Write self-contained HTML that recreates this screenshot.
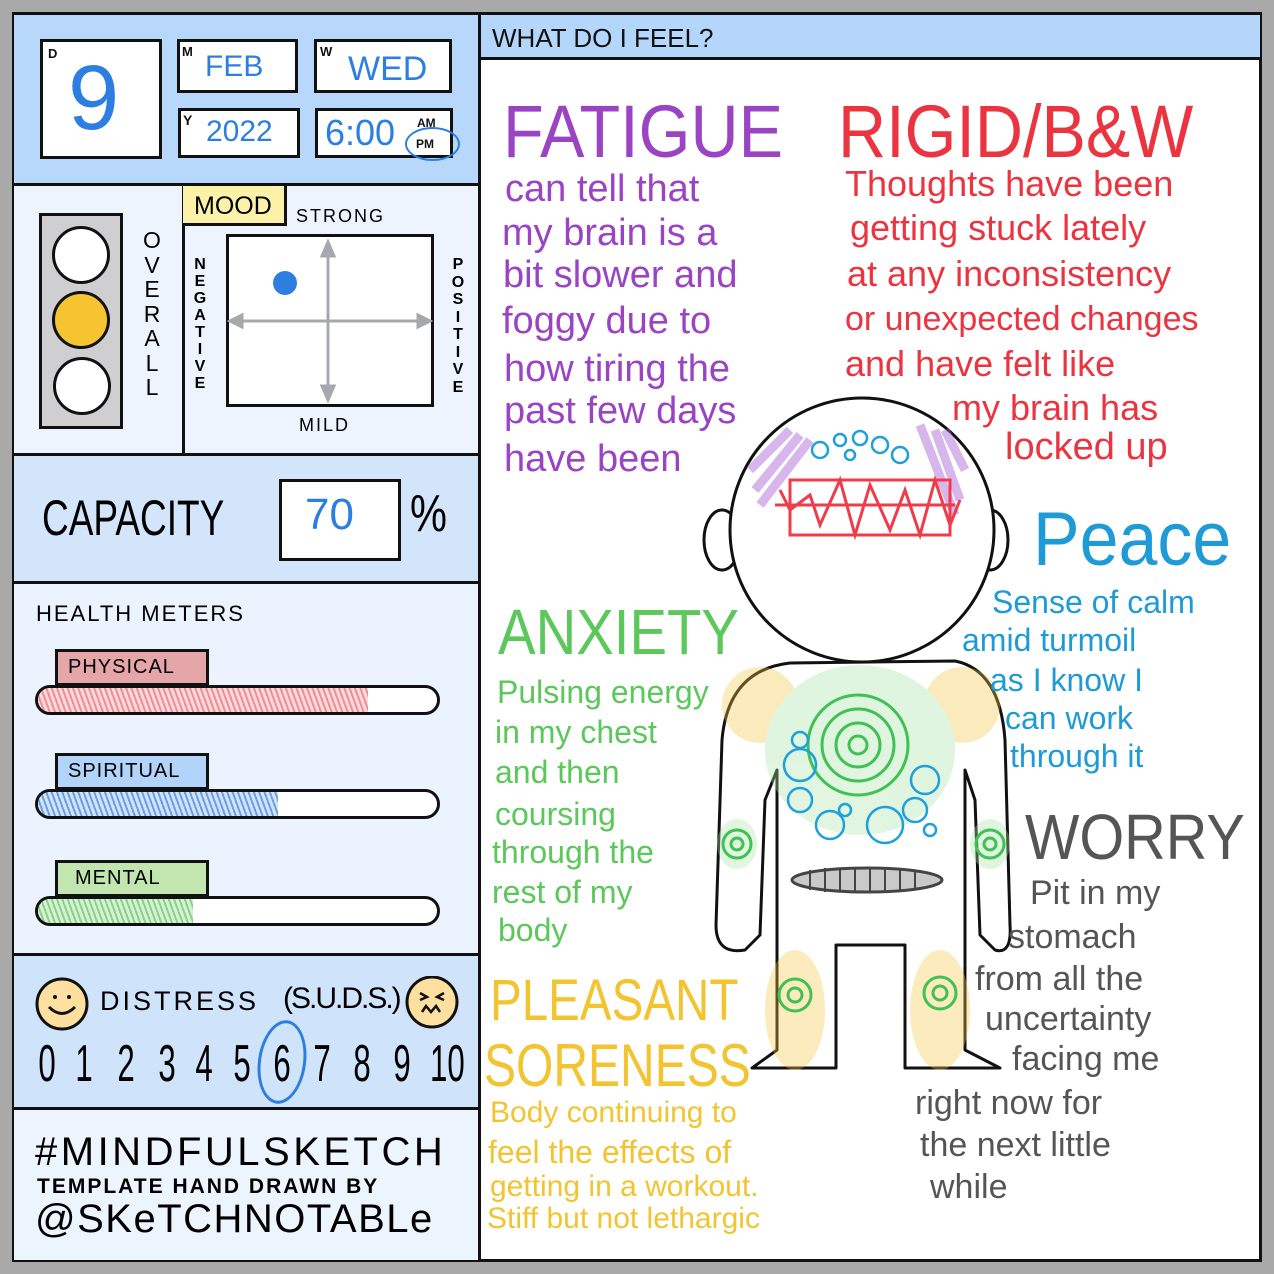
<!DOCTYPE html>
<html><head><meta charset="utf-8"><style>
*{margin:0;padding:0;box-sizing:border-box}
body{width:1274px;height:1274px;background:#a9a9a9;position:relative;overflow:hidden;font-family:"Liberation Sans",sans-serif}
.a{position:absolute}
.t{position:absolute;white-space:nowrap;line-height:1}
.sec{position:absolute;left:14px;width:466px;border-bottom:3px solid #111}
.box{position:absolute;background:#fff;border:3px solid #111}
.lab{position:absolute;font-size:15px;font-weight:bold;color:#111}
.hw{color:#2c7fe0}
.n{position:absolute;top:1038px;width:40px;text-align:center;font-size:52px;line-height:1;transform:scaleX(.6)}
</style></head><body>
<div class="a" style="left:12px;top:12px;width:1250px;height:1250px;background:#fff;border:3px solid #111"></div>
<!-- left sections -->
<div class="sec" style="top:15px;height:171px;background:#b8d8fb"></div>
<div class="sec" style="top:186px;height:270px;background:#edf4fe"></div>
<div class="sec" style="top:456px;height:128px;background:#d2e5fb"></div>
<div class="sec" style="top:584px;height:372px;background:#ebf3fe"></div>
<div class="sec" style="top:956px;height:154px;background:#cfe3fb"></div>
<div class="sec" style="top:1110px;height:150px;background:#ecf4fe;border-bottom:none"></div>
<div class="a" style="left:478px;top:14px;width:3px;height:1248px;background:#111"></div>
<div class="a" style="left:182px;top:186px;width:3px;height:270px;background:#111"></div>
<!-- right header -->
<div class="a" style="left:481px;top:15px;width:779px;height:45px;background:#b5d6fb;border-bottom:3px solid #111"></div>
<div class="t" style="left:492px;top:25px;font-size:26px;color:#111">WHAT DO I FEEL?</div>

<!-- date -->
<div class="box" style="left:40px;top:39px;width:122px;height:120px"></div>
<div class="lab" style="left:48px;top:46px;font-size:13px">D</div>
<div class="t hw" style="left:68px;top:52px;font-size:92px">9</div>
<div class="box" style="left:177px;top:39px;width:121px;height:54px"></div>
<div class="lab" style="left:182px;top:44px;font-size:13px">M</div>
<div class="t hw" style="left:205px;top:52px;font-size:30px">FEB</div>
<div class="box" style="left:314px;top:39px;width:138px;height:54px"></div>
<div class="lab" style="left:320px;top:44px;font-size:13px">W</div>
<div class="t hw" style="left:348px;top:52px;font-size:34px">WED</div>
<div class="box" style="left:178px;top:108px;width:122px;height:50px"></div>
<div class="lab" style="left:183px;top:112px;font-size:14px">Y</div>
<div class="t hw" style="left:206px;top:117px;font-size:30px">2022</div>
<div class="box" style="left:315px;top:108px;width:138px;height:50px"></div>
<div class="t hw" style="left:325px;top:115px;font-size:36px">6:00</div>
<div class="lab" style="left:417px;top:116px;font-size:12px">AM</div>
<div class="lab" style="left:416px;top:137px;font-size:12px">PM</div>
<div class="a" style="left:405px;top:127px;width:55px;height:34px;border:2.5px solid #2c7fe0;border-radius:50%"></div>

<!-- traffic light -->
<div class="a" style="left:39px;top:213px;width:84px;height:216px;background:#cfcfd1;border:3px solid #111"></div>
<div class="a" style="left:52px;top:226px;width:58px;height:58px;border-radius:50%;background:#fff;border:3px solid #111"></div>
<div class="a" style="left:52px;top:291px;width:58px;height:58px;border-radius:50%;background:#f7c431;border:3px solid #111"></div>
<div class="a" style="left:53px;top:357px;width:58px;height:58px;border-radius:50%;background:#fff;border:3px solid #111"></div>
<div class="t" style="left:142px;top:228px;font-size:23px;width:20px;text-align:center;line-height:24.5px;white-space:normal">O V E R A L L</div>
<!-- mood -->
<div class="a" style="left:183px;top:186px;width:104px;height:40px;background:#fcf1a8;border:3px solid #111;border-left:none;border-top:none"></div>
<div class="t" style="left:194px;top:194px;font-size:25px">MOOD</div>
<div class="t" style="left:296px;top:207px;font-size:18px;letter-spacing:2px">STRONG</div>
<div class="t" style="left:299px;top:416px;font-size:18px;letter-spacing:2px">MILD</div>
<div class="t" style="left:192px;top:256px;font-size:16px;font-weight:bold;width:16px;text-align:center;line-height:17px;white-space:normal">N E G A T I V E</div>
<div class="t" style="left:450px;top:256px;font-size:16px;font-weight:bold;width:16px;text-align:center;line-height:17.5px;white-space:normal">P O S I T I V E</div>
<div class="box" style="left:226px;top:234px;width:208px;height:173px"></div>
<svg class="a" style="left:226px;top:234px" width="208" height="173">
<g stroke="#a6a8ad" stroke-width="3" fill="#a6a8ad">
<line x1="102" y1="14" x2="102" y2="160"/><line x1="8" y1="87" x2="200" y2="87"/>
<path d="M96 22 L102 8 L108 22Z"/><path d="M96 152 L102 166 L108 152Z"/>
<path d="M16 81 L4 87 L16 93Z"/><path d="M192 81 L204 87 L192 93Z"/></g>
<ellipse cx="59" cy="49" rx="12" ry="12" fill="#2c7fe0"/></svg>

<!-- capacity -->
<div class="t" style="left:42px;top:493px;font-size:50px;transform:scaleX(.74);transform-origin:left">CAPACITY</div>
<div class="box" style="left:279px;top:479px;width:122px;height:82px;border-width:3px"></div>
<div class="t hw" style="left:305px;top:493px;font-size:44px">70</div>
<div class="t" style="left:410px;top:488px;font-size:52px;font-weight:lighter;transform:scaleX(.8);transform-origin:left">%</div>

<!-- health -->
<div class="t" style="left:36px;top:603px;font-size:22px;letter-spacing:2px">HEALTH METERS</div>
<div class="a" style="left:55px;top:649px;width:154px;height:37px;background:#e5a6aa;border:3px solid #111"></div>
<div class="t" style="left:68px;top:657px;font-size:20px;letter-spacing:1px">PHYSICAL</div>
<div class="a" style="left:35px;top:685px;width:405px;height:30px;background:#fff;border:3px solid #111;border-radius:15px;overflow:hidden"><div style="width:330px;height:100%;background:repeating-linear-gradient(70deg,#f08e95 0 2px,#fbd9db 2px 5px)"></div></div>
<div class="a" style="left:55px;top:753px;width:154px;height:37px;background:#b3d4fa;border:3px solid #111"></div>
<div class="t" style="left:68px;top:761px;font-size:20px;letter-spacing:1px">SPIRITUAL</div>
<div class="a" style="left:35px;top:789px;width:405px;height:30px;background:#fff;border:3px solid #111;border-radius:15px;overflow:hidden"><div style="width:240px;height:100%;background:repeating-linear-gradient(70deg,#6a9fe8 0 2px,#d3e3f9 2px 5px)"></div></div>
<div class="a" style="left:55px;top:860px;width:154px;height:37px;background:#c2e6b0;border:3px solid #111"></div>
<div class="t" style="left:75px;top:868px;font-size:20px;letter-spacing:1px">MENTAL</div>
<div class="a" style="left:35px;top:896px;width:405px;height:30px;background:#fff;border:3px solid #111;border-radius:15px;overflow:hidden"><div style="width:155px;height:100%;background:repeating-linear-gradient(70deg,#86d488 0 2px,#d8f1d5 2px 5px)"></div></div>

<!-- distress -->
<svg class="a" style="left:34px;top:976px" width="430" height="56">
<circle cx="28" cy="28" r="25" fill="#fde0a0" stroke="#111" stroke-width="3"/>
<circle cx="21" cy="21" r="2" fill="#111"/><circle cx="35" cy="21" r="2" fill="#111"/>
<path d="M15 31 Q28 44 41 31" stroke="#111" stroke-width="3" fill="none"/>
<circle cx="398" cy="26" r="25" fill="#fde0a0" stroke="#111" stroke-width="3"/>
<path d="M386 17 L393 21 L386 24 M410 17 L403 21 L410 24 M388 36 L392 30 L397 36 L402 30 L406 36" stroke="#111" stroke-width="2.5" fill="none"/></svg>
<div class="t" style="left:100px;top:988px;font-size:27px;letter-spacing:3px">DISTRESS</div>
<div class="t" style="left:283px;top:984px;font-size:30px;letter-spacing:-2px">(S.U.D.S.)</div>
<div class="n" style="left:27px">0</div><div class="n" style="left:64px">1</div><div class="n" style="left:106px">2</div><div class="n" style="left:147px">3</div><div class="n" style="left:184px">4</div><div class="n" style="left:222px">5</div><div class="n" style="left:262px">6</div><div class="n" style="left:302px">7</div><div class="n" style="left:342px">8</div><div class="n" style="left:382px">9</div><div class="n" style="left:422px">10</div>
<div class="a" style="left:258px;top:1020px;width:48px;height:84px;border:3px solid #2c7fe0;border-radius:50%;transform:rotate(8deg)"></div>

<!-- footer -->
<div class="t" style="left:35px;top:1132px;font-size:40px;letter-spacing:3.5px">#MINDFULSKETCH</div>
<div class="t" style="left:37px;top:1176px;font-size:21px;font-weight:bold;letter-spacing:2px">TEMPLATE HAND DRAWN BY</div>
<div class="t" style="left:35px;top:1199px;font-size:40px;letter-spacing:1.5px">@SKeTCHNOTABLe</div>

<!-- figure -->
<svg class="a" style="left:0;top:0" width="1274" height="1274">
<g fill="#fff" stroke="#111" stroke-width="3" stroke-linejoin="round">
<ellipse cx="722" cy="540" rx="18" ry="30"/><ellipse cx="990" cy="540" rx="18" ry="30"/>
<path d="M790 663 Q728 670 722 740 L716 925 Q716 955 745 950 L760 935 L765 800 L777 770 L777 1050 L752 1068 L836 1068 L836 945 L905 945 L905 1068 L1000 1068 L965 1050 L965 770 L975 800 L980 935 L995 950 Q1012 955 1010 925 L1005 740 Q1000 670 955 661 Z"/>
<ellipse cx="862" cy="530" rx="132" ry="132"/></g>
<g opacity=".35">
<ellipse cx="760" cy="705" rx="38" ry="38" fill="#f4c542"/>
<ellipse cx="962" cy="705" rx="38" ry="38" fill="#f4c542"/>
<ellipse cx="860" cy="750" rx="95" ry="85" fill="#a8e3a8"/>
<ellipse cx="795" cy="1010" rx="30" ry="60" fill="#f4c542"/>
<ellipse cx="940" cy="1010" rx="30" ry="60" fill="#f4c542"/>
<ellipse cx="737" cy="844" rx="20" ry="25" fill="#a8e3a8"/><ellipse cx="990" cy="844" rx="20" ry="25" fill="#a8e3a8"/>
</g>
<path d="M790 430 L750 470 M800 435 L755 490 M810 440 L760 505 M945 430 L965 470 M935 430 L960 500 M920 425 L955 515" stroke="#a760d4" stroke-width="9" opacity=".45"/>
<g fill="none" stroke="#3fc154" stroke-width="3">
<circle cx="858" cy="745" r="50"/><circle cx="858" cy="745" r="36"/><circle cx="858" cy="745" r="22"/><circle cx="858" cy="745" r="9"/>
<circle cx="737" cy="844" r="14"/><circle cx="737" cy="844" r="6"/><circle cx="990" cy="844" r="14"/><circle cx="990" cy="844" r="6"/>
<circle cx="795" cy="995" r="16"/><circle cx="795" cy="995" r="7"/><circle cx="940" cy="993" r="16"/><circle cx="940" cy="993" r="7"/></g>
<g fill="none" stroke="#1ea1d8" stroke-width="2.5">
<circle cx="800" cy="765" r="16"/><circle cx="800" cy="800" r="12"/><circle cx="830" cy="825" r="14"/><circle cx="885" cy="825" r="18"/><circle cx="915" cy="810" r="12"/><circle cx="925" cy="780" r="14"/><circle cx="800" cy="740" r="8"/><circle cx="845" cy="810" r="6"/><circle cx="930" cy="830" r="6"/><circle cx="820" cy="450" r="8"/><circle cx="840" cy="440" r="6"/><circle cx="860" cy="438" r="7"/><circle cx="880" cy="445" r="8"/><circle cx="900" cy="455" r="8"/><circle cx="850" cy="455" r="5"/></g>
<g fill="none" stroke="#ef3b4a" stroke-width="3">
<path d="M780 490 L790 510 L810 495 L820 525 L840 480 L855 535 L870 485 L890 530 L905 490 L920 535 L935 480 L950 525 L960 500 M775 505 L955 505 M790 480 L790 535 L950 535 L950 480 Z"/></g>
<ellipse cx="867" cy="880" rx="75" ry="12" fill="#c9c9c9" stroke="#444" stroke-width="3"/>
<path d="M810 870 L810 890 M825 868 L825 892 M840 868 L840 892 M855 868 L855 892 M870 868 L870 892 M885 868 L885 892 M900 868 L900 892 M915 870 L915 890" stroke="#444" stroke-width="2"/>
</svg>

<!-- right texts -->
<div style="color:#9a44c4">
<div class="t" style="left:503px;top:95px;font-size:74px;transform:scaleX(.9);transform-origin:left">FATIGUE</div>
<div class="t" style="left:505px;top:170px;font-size:38px">can tell that</div>
<div class="t" style="left:502px;top:214px;font-size:38px">my brain is a</div>
<div class="t" style="left:503px;top:256px;font-size:38px">bit slower and</div>
<div class="t" style="left:502px;top:302px;font-size:38px">foggy due to</div>
<div class="t" style="left:504px;top:350px;font-size:38px">how tiring the</div>
<div class="t" style="left:504px;top:392px;font-size:38px">past few days</div>
<div class="t" style="left:504px;top:440px;font-size:38px">have been</div>
</div>
<div style="color:#ea3440">
<div class="t" style="left:838px;top:95px;font-size:74px;transform:scaleX(.9);transform-origin:left">RIGID/B&amp;W</div>
<div class="t" style="left:845px;top:166px;font-size:36px">Thoughts have been</div>
<div class="t" style="left:850px;top:210px;font-size:36px">getting stuck lately</div>
<div class="t" style="left:847px;top:256px;font-size:36px">at any inconsistency</div>
<div class="t" style="left:845px;top:302px;font-size:34px">or unexpected changes</div>
<div class="t" style="left:845px;top:346px;font-size:36px">and have felt like</div>
<div class="t" style="left:952px;top:390px;font-size:36px">my brain has</div>
<div class="t" style="left:1005px;top:428px;font-size:38px">locked up</div>
</div>
<div style="color:#1e9bd6">
<div class="t" style="left:1033px;top:502px;font-size:76px;transform:scaleX(.92);transform-origin:left">Peace</div>
<div class="t" style="left:992px;top:586px;font-size:32px">Sense of calm</div>
<div class="t" style="left:962px;top:624px;font-size:32px">amid turmoil</div>
<div class="t" style="left:990px;top:664px;font-size:32px">as I know I</div>
<div class="t" style="left:1005px;top:702px;font-size:32px">can work</div>
<div class="t" style="left:1010px;top:740px;font-size:32px">through it</div>
</div>
<div style="color:#5cc75a">
<div class="t" style="left:498px;top:600px;font-size:64px;transform:scaleX(.88);transform-origin:left">ANXIETY</div>
<div class="t" style="left:497px;top:676px;font-size:32px">Pulsing energy</div>
<div class="t" style="left:495px;top:716px;font-size:32px">in my chest</div>
<div class="t" style="left:495px;top:756px;font-size:32px">and then</div>
<div class="t" style="left:495px;top:798px;font-size:32px">coursing</div>
<div class="t" style="left:492px;top:836px;font-size:32px">through the</div>
<div class="t" style="left:492px;top:876px;font-size:32px">rest of my</div>
<div class="t" style="left:498px;top:914px;font-size:32px">body</div>
</div>
<div style="color:#f3c431">
<div class="t" style="left:490px;top:972px;font-size:58px;transform:scaleX(.82);transform-origin:left">PLEASANT</div>
<div class="t" style="left:484px;top:1036px;font-size:60px;transform:scaleX(.8);transform-origin:left">SORENESS</div>
<div class="t" style="left:490px;top:1098px;font-size:30px">Body continuing to</div>
<div class="t" style="left:488px;top:1136px;font-size:32px">feel the effects of</div>
<div class="t" style="left:490px;top:1172px;font-size:30px">getting in a workout.</div>
<div class="t" style="left:487px;top:1204px;font-size:30px">Stiff but not lethargic</div>
</div>
<div style="color:#555">
<div class="t" style="left:1025px;top:805px;font-size:64px;transform:scaleX(.9);transform-origin:left">WORRY</div>
<div class="t" style="left:1030px;top:876px;font-size:34px">Pit in my</div>
<div class="t" style="left:1008px;top:920px;font-size:34px">stomach</div>
<div class="t" style="left:975px;top:962px;font-size:34px">from all the</div>
<div class="t" style="left:985px;top:1002px;font-size:34px">uncertainty</div>
<div class="t" style="left:1012px;top:1042px;font-size:34px">facing me</div>
<div class="t" style="left:915px;top:1086px;font-size:34px">right now for</div>
<div class="t" style="left:920px;top:1128px;font-size:34px">the next little</div>
<div class="t" style="left:930px;top:1170px;font-size:34px">while</div>
</div>
</body></html>
